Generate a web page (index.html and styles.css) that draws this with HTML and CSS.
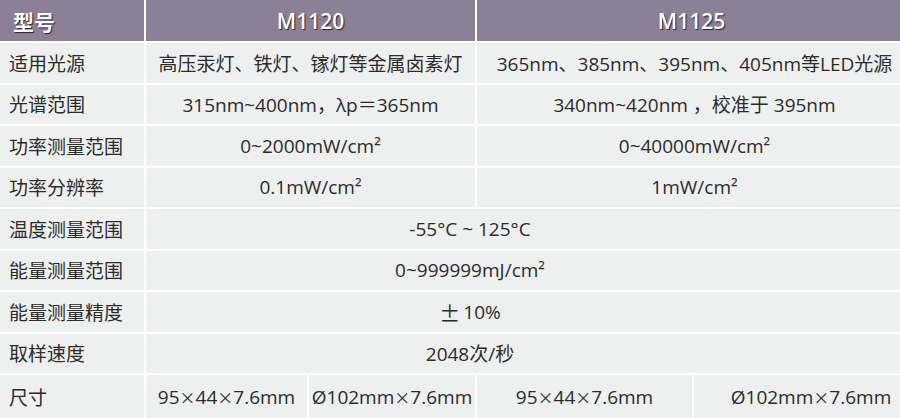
FILE: index.html
```html
<!DOCTYPE html>
<html lang="zh-CN">
<head>
<meta charset="utf-8">
<title>参数表</title>
<link rel="stylesheet" href="styles.css">
</head>
<body>
<div class="spec">
  <div class="cell head label">型号</div>
  <div class="cell head span-a">M1120</div>
  <div class="cell head span-b">M1125</div>

  <div class="cell label">适用光源</div>
  <div class="cell span-a">高压汞灯、铁灯、镓灯等金属卤素灯</div>
  <div class="cell span-b">365nm、385nm、395nm、405nm等LED光源</div>

  <div class="cell label">光谱范围</div>
  <div class="cell span-a">315nm~400nm，λp＝365nm</div>
  <div class="cell span-b">340nm~420nm ，校准于 395nm</div>

  <div class="cell label">功率测量范围</div>
  <div class="cell span-a">0~2000mW/cm²</div>
  <div class="cell span-b">0~40000mW/cm²</div>

  <div class="cell label">功率分辨率</div>
  <div class="cell span-a">0.1mW/cm²</div>
  <div class="cell span-b">1mW/cm²</div>

  <div class="cell label">温度测量范围</div>
  <div class="cell span-all">-55°C ~ 125°C</div>

  <div class="cell label">能量测量范围</div>
  <div class="cell span-all">0~999999mJ/cm²</div>

  <div class="cell label">能量测量精度</div>
  <div class="cell span-all"><span class="pm">±</span>10%</div>

  <div class="cell label">取样速度</div>
  <div class="cell span-all">2048次/秒</div>

  <div class="cell label">尺寸</div>
  <div class="cell">95<span class="times">×</span>44<span class="times">×</span>7.6mm</div>
  <div class="cell">Ø102mm<span class="times">×</span>7.6mm</div>
  <div class="cell">95<span class="times">×</span>44<span class="times">×</span>7.6mm</div>
  <div class="cell last">Ø102mm<span class="times">×</span>7.6mm</div>
</div>
</body>
</html>
```
FILE: styles.css
```css
html, body {
  margin: 0;
  padding: 0;
  background: #ffffff;
}

.spec {
  width: 900px;
  height: 418px;
  display: grid;
  grid-template-columns: 144px 161px 166px 215px 206px;
  grid-template-rows: 41px repeat(8, 39.5px) 1fr;
  gap: 2px;
  font-family: "Open Sans", "Noto Sans CJK SC", sans-serif;
  font-size: 19px;
  color: #2b2b2b;
}

.cell {
  background: #eef0f0;
  display: flex;
  align-items: center;
  justify-content: center;
  white-space: nowrap;
  overflow: visible;
}

.label {
  justify-content: flex-start;
  padding-left: 9px;
}

.head {
  background: #8b8096;
  color: #ffffff;
  font-weight: 600;
  font-size: 21px;
  text-shadow: 1px 1px 1px rgba(30, 20, 40, 0.9);
}

.head.label {
  padding-left: 13px;
  font-weight: 700;
}

.span-a {
  grid-column: 2 / 4;
}

.span-b {
  grid-column: 4 / 6;
  padding-left: 12px;
}

.head.span-b {
  padding-left: 6px;
}

.span-all {
  grid-column: 2 / 6;
  padding-right: 106px;
}

.times {
  font-family: "Noto Sans CJK SC", sans-serif;
  font-size: 16px;
}

.pm {
  font-family: "Noto Sans CJK SC", sans-serif;
  font-size: 21px;
  margin-right: 3px;
}

.last {
  padding-left: 28px;
}
```
